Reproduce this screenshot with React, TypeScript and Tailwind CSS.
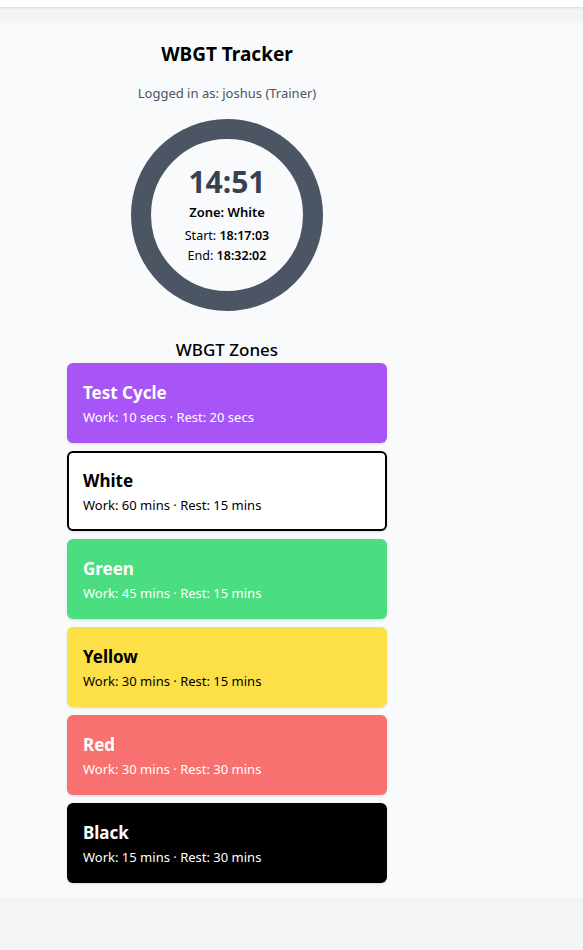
import React from "react";

const zones = [
  { name: "Test Cycle", detail: "Work: 10 secs · Rest: 20 secs", cls: "bg-[#a855f7] text-white px-4" },
  { name: "White", detail: "Work: 60 mins · Rest: 15 mins", cls: "bg-white text-black border-2 border-black px-[14px]" },
  { name: "Green", detail: "Work: 45 mins · Rest: 15 mins", cls: "bg-[#4ade80] text-white px-4" },
  { name: "Yellow", detail: "Work: 30 mins · Rest: 15 mins", cls: "bg-[#fde047] text-black px-4" },
  { name: "Red", detail: "Work: 30 mins · Rest: 30 mins", cls: "bg-[#f87171] text-white px-4" },
  { name: "Black", detail: "Work: 15 mins · Rest: 30 mins", cls: "bg-black text-white px-4" },
];

export default function App() {
  return (
    <div className="min-h-[950px] bg-[#f3f4f6] font-['Noto_Sans','Open_Sans',sans-serif]">
      <div className="h-[7px] bg-white shadow-[0_1px_2px_rgba(0,0,0,0.12)]" />
      <div className="pt-4">
        <div className="bg-[#f9fafb] pt-[17px] pb-[15px]">
          <div className="w-[454px] flex flex-col items-center">
            <h1 className="text-[19px] leading-7 font-bold text-black">WBGT Tracker</h1>
            <p className="mt-[15px] text-[13px] leading-5 text-[#4b5563]">Logged in as: joshus (Trainer)</p>
            <div className="mt-4 w-[192px] h-[192px] rounded-full border-[20px] border-[#4b5563] flex flex-col items-center justify-center">
              <div className="text-[30px] leading-9 font-bold text-[#374151]">14:51</div>
              <div className="mt-[2px] text-[13px] leading-5 font-semibold text-black">Zone: White</div>
              <div className="mt-1 text-[12.5px] leading-5 text-black">
                Start: <span className="font-semibold">18:17:03</span>
              </div>
              <div className="text-[12.5px] leading-5 text-black">
                End: <span className="font-semibold">18:32:02</span>
              </div>
            </div>
            <h2 className="mt-[25px] text-[17px] leading-7 font-medium text-black">WBGT Zones</h2>
            <div className="mt-[-1px] w-[320px] flex flex-col gap-2">
              {zones.map((z) => (
                <div
                  key={z.name}
                  className={`h-[80px] rounded-md shadow-sm flex flex-col justify-center ${z.cls}`}
                >
                  <div className="text-[17px] leading-7 font-bold">{z.name}</div>
                  <div className="text-[13px] leading-5">{z.detail}</div>
                </div>
              ))}
            </div>
          </div>
        </div>
      </div>
    </div>
  );
}
